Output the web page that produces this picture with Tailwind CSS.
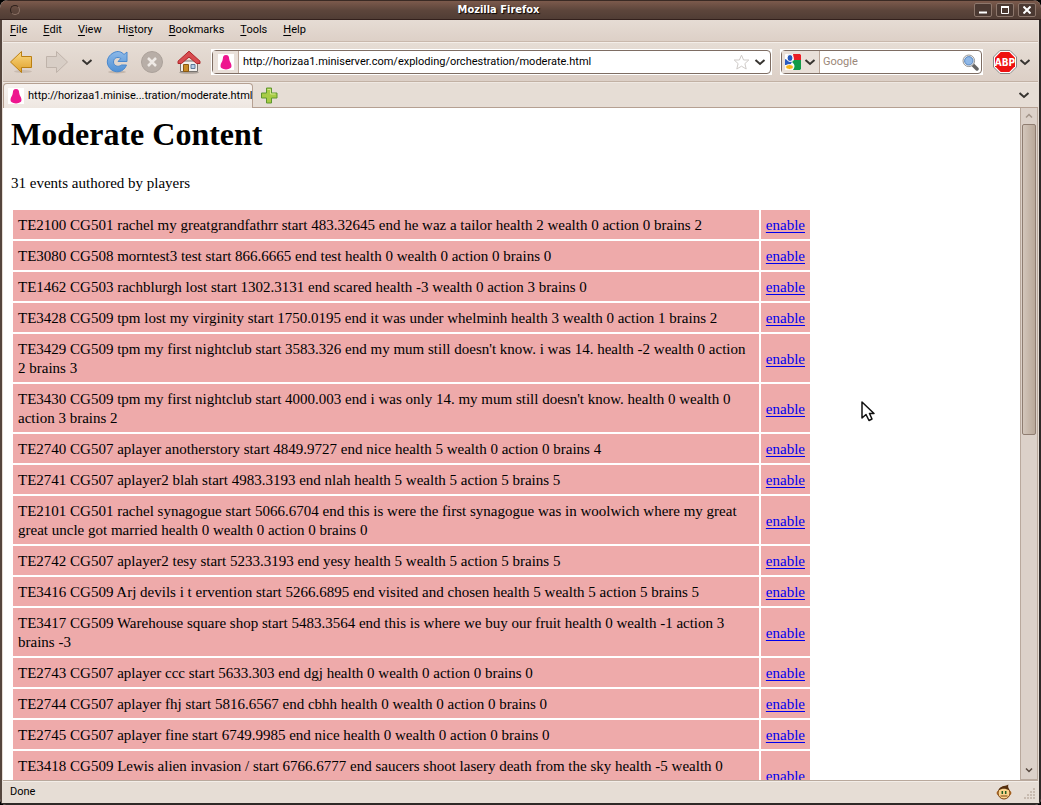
<!DOCTYPE html>
<html lang="en">
<head>
<meta charset="utf-8">
<title>Mozilla Firefox</title>
<script src="https://cdn.jsdelivr.net/npm/@tailwindcss/browser@4"></script>
</head>
<body class="bg-black">
<div class="flex h-screen flex-col overflow-hidden rounded-t-lg rounded-b-md bg-[#e6ddd5] font-['Roboto',sans-serif] text-[11px] text-black">
  <header class="relative flex h-5 shrink-0 items-center justify-center border-t border-[#3a2a24] bg-linear-to-b from-[#7c5a4c] via-[#5c453b] to-[#4f3c34] pr-11 shadow-[inset_0_-1px_0_#33201c]">
    <span class="absolute left-2.5 top-1 size-2.5 rounded-full border border-[#8b7266] border-t-[#2e211c] border-l-[#2e211c]"></span>
    <h1 class="font-['DejaVu_Sans_Condensed','DejaVu_Sans',sans-serif] font-bold text-white [text-shadow:1px_1px_1px_#000]">Mozilla Firefox</h1>
    <div class="absolute right-[5px] top-0.5 flex gap-1">
      <button aria-label="Minimize" class="flex h-3.5 w-[18px] items-center justify-center rounded-xs border border-[#8d776c] bg-[#4b3932]"><svg width="8" height="8" viewBox="0 0 8 8"><path d="M0 6.500H8" stroke="#fff" stroke-width="2"/></svg></button>
      <button aria-label="Maximize" class="flex h-3.5 w-[18px] items-center justify-center rounded-xs border border-[#8d776c] bg-[#4b3932]"><svg width="8" height="8" viewBox="0 0 8 8"><path d="M.5 1H7.500V7.500H.5Z" fill="none" stroke="#fff"/><path d="M0 1H8" stroke="#fff" stroke-width="2"/></svg></button>
      <button aria-label="Close" class="flex h-3.5 w-[18px] items-center justify-center rounded-xs border border-[#8d776c] bg-[#4b3932]"><svg width="8" height="8" viewBox="0 0 8 8"><path d="M.5.5 7.500 7.500M7.500.5.5 7.500" stroke="#fff" stroke-width="2"/></svg></button>
    </div>
  </header>

  <div class="flex min-h-0 flex-1 flex-col border-x-2 border-b-2 border-[#54453d] border-r-[#2f2927] border-b-[#2f2927] px-px">
    <nav class="flex h-[22px] shrink-0 items-center gap-4 border-b border-[#c9b8ac] bg-linear-to-b from-[#e6dcd4] to-[#ddd0c7] px-[7px]">
      <button><u class="underline-offset-2">F</u>ile</button>
      <button><u class="underline-offset-2">E</u>dit</button>
      <button><u class="underline-offset-2">V</u>iew</button>
      <button>Hi<u class="underline-offset-2">s</u>tory</button>
      <button><u class="underline-offset-2">B</u>ookmarks</button>
      <button><u class="underline-offset-2">T</u>ools</button>
      <button><u class="underline-offset-2">H</u>elp</button>
    </nav>

    <div class="flex h-10 shrink-0 items-center border-t border-b border-t-[#f3ede8] border-b-[#c2b1a4] bg-linear-to-b from-[#e6ddd5] to-[#dccfc6] pl-1.5 pr-[7px]">
      <button aria-label="Back"><svg width="24" height="24" viewBox="0 0 24 24"><defs><linearGradient id="gold" x2="0" y2="1"><stop stop-color="#fbd984"/><stop offset="1" stop-color="#dfa02a"/></linearGradient></defs><ellipse cx="14" cy="21.500" rx="9" ry="1.500" fill="#c9bbb0"/><path d="M12.500 1.500V6.500H22.500V17.500H12.500V22.500L1.500 12Z" fill="url(#gold)" stroke="#bb7f11" stroke-linejoin="round"/></svg></button>
      <button aria-label="Forward" class="ml-3"><svg width="24" height="24" viewBox="0 0 24 24"><path d="M11.500 1.500V6.500H1.500V17.500H11.500V22.500L22.500 12Z" fill="#d8cec6" stroke="#bfb3aa" stroke-linejoin="round"/></svg></button>
      <button aria-label="History" class="ml-3"><svg width="12" height="12" viewBox="0 0 12 12"><path d="M1.500 4 6 8 10.500 4" fill="none" stroke="#373430" stroke-width="2"/></svg></button>
      <button aria-label="Reload" class="ml-[13px]"><svg width="22" height="24" viewBox="0 0 22 24"><defs><linearGradient id="blue" x2="0" y2="1"><stop stop-color="#8db9e8"/><stop offset="1" stop-color="#5191d5"/></linearGradient></defs><ellipse cx="11" cy="22" rx="9" ry="1.500" fill="#c4b6ab"/><path d="M21 2V11.500H12L14.800 8.500C11 6 7.500 8.500 7.500 12S12 17.800 15.500 15H20.500C18 22.500 9 24 4 18.500S1.500 6 7 3 15.500 2 18 4.500Z" fill="url(#blue)" stroke="#4a88cd"/></svg></button>
      <button aria-label="Stop" class="ml-[13px]"><svg width="22" height="24" viewBox="0 0 22 24"><circle cx="11" cy="12" r="10.500" fill="#b8aea7" stroke="#aba19a"/><path d="M7 8 15 16M15 8 7 16" stroke="#eee9e5" stroke-width="2.500"/></svg></button>
      <button aria-label="Home" class="ml-3.5"><svg width="24" height="24" viewBox="0 0 24 24"><ellipse cx="12" cy="22.500" rx="10" ry="1.300" fill="#aaa098"/><path d="M3.500 11H20.500V21.500H3.500Z" fill="#f2efec" stroke="#77736f"/><path d="M12 1.200 1 11.200V13.500H4.500L12 7 19.500 13.500H23V11.200Z" fill="#d84c50" stroke="#ae2529" stroke-linejoin="round"/><path d="M6.500 14.500H11.500V21.500H6.500Z" fill="#c98b28" stroke="#8a5a12"/><path d="M14 14.500H18V18.500H14Z" fill="#b6cde5" stroke="#5e7a99"/></svg></button>
      <div class="ml-2.5 flex h-[26px] min-w-0 flex-1 border border-white bg-white">
        <div class="flex min-w-0 flex-1 items-center rounded-sm border border-[#7e6d63] bg-white pr-1">
          <span class="flex h-full w-[26px] items-center justify-center border-r border-[#b9a598] bg-[#e9e0d9]"><svg class="bg-white" width="16" height="16" viewBox="0 0 16 16"><path d="M8 1C5.500 1 5 2.500 4.800 5 4.500 8 2.500 9 2.500 12 2.500 14 4 14.500 5.500 15 7 15.500 9 15.500 10.500 15 12 14.500 13.500 14 13.500 12 13.500 9 11.500 8 11.200 5 11 2.500 10.500 1 8 1Z" fill="#ee168f"/></svg></span>
          <input aria-label="Address" value="http://horizaa1.miniserver.com/exploding/orchestration/moderate.html" class="min-w-0 flex-1 bg-transparent pl-1 outline-none">
          <button aria-label="Bookmark"><svg width="17" height="17" viewBox="0 0 17 17"><path d="M8.500 1.200 10.600 6H15.800L11.900 9.600 13.200 15 8.500 12.200 3.800 15 5.100 9.600 1.200 6H6.400Z" fill="#fff" stroke="#cfcbc8"/></svg></button>
          <button aria-label="Show history" class="ml-1"><svg width="12" height="12" viewBox="0 0 12 12"><path d="M1.500 4 6 8 10.500 4" fill="none" stroke="#373430" stroke-width="2"/></svg></button>
        </div>
      </div>
      <div class="ml-2 flex h-[26px] w-[203px] border border-white bg-white">
        <div class="flex min-w-0 flex-1 items-center rounded-sm border border-[#7e6d63] bg-white pr-0.5">
          <button aria-label="Search engine" class="flex h-full w-[38px] shrink-0 items-center justify-center gap-[3px] border-r border-[#b9a598] bg-[#e9e0d9]"><svg width="16" height="16" viewBox="0 0 16 16"><rect width="16" height="16" rx="1" fill="#fff"/><path d="M8 0H15L16 1V6H9Z" fill="#eb1c24"/><path d="M9 6H16V15L15 16H8C11 12 9 10 7 8Z" fill="#119b48"/><path d="M0 5 7 8 5 11H0Z" fill="#2a5cc0"/><ellipse cx="5" cy="4" rx="3" ry="3.500" fill="#2659bd" stroke="#fff"/><ellipse cx="4.500" cy="13" rx="4" ry="2.500" fill="#f8b617" stroke="#fff"/></svg><svg width="12" height="12" viewBox="0 0 12 12"><path d="M1.500 4 6 8 10.500 4" fill="none" stroke="#373430" stroke-width="2"/></svg></button>
          <input aria-label="Search" placeholder="Google" class="min-w-0 flex-1 bg-transparent pl-[3px] outline-none placeholder:text-[#9b8778]">
          <button aria-label="Search"><svg width="17" height="17" viewBox="0 0 17 17"><path d="M10.500 10.500 15 15" stroke="#666" stroke-width="3.500" stroke-linecap="round"/><circle cx="6.800" cy="6.800" r="5.800" fill="#eee" stroke="#999"/><circle cx="6.800" cy="6.800" r="4.200" fill="#8fb8e8" stroke="#5685c0"/></svg></button>
        </div>
      </div>
      <button aria-label="Adblock Plus" class="ml-2.5 flex items-center gap-0.5"><svg width="24" height="24" viewBox="0 0 24 24"><path d="M7 .5H17L23.500 7V17L17 23.500H7L.5 17V7Z" fill="#fff" stroke="#888"/><path d="M7.700 2H16.300L22 7.700V16.300L16.300 22H7.700L2 16.300V7.700Z" fill="#ee1111"/><text x="12" y="16" text-anchor="middle" font-family="DejaVu Sans Condensed, DejaVu Sans" font-weight="bold" font-size="10" fill="#fff">ABP</text></svg><svg width="12" height="12" viewBox="0 0 12 12"><path d="M1.500 4 6 8 10.500 4" fill="none" stroke="#373430" stroke-width="2"/></svg></button>
    </div>

    <div class="flex h-[26px] shrink-0 items-stretch border-t border-[#efe8e2] bg-[#e6ddd5]">
      <button class="flex w-[250px] items-center gap-1 rounded-t-sm border-x border-t border-[#b5a092] bg-linear-to-b from-[#f7f3f0] to-[#eee7e1] pl-1"><svg class="shrink-0 bg-white" width="16" height="16" viewBox="0 0 16 16"><path d="M8 1C5.500 1 5 2.500 4.800 5 4.500 8 2.500 9 2.500 12 2.500 14 4 14.500 5.500 15 7 15.500 9 15.500 10.500 15 12 14.500 13.500 14 13.500 12 13.500 9 11.500 8 11.200 5 11 2.500 10.500 1 8 1Z" fill="#ee168f"/></svg><span class="whitespace-nowrap">http://horizaa1.minise...tration/moderate.html</span></button>
      <div class="flex flex-1 items-center justify-between border-b border-[#b5a092] pl-2 pr-2">
        <button aria-label="New tab"><svg width="17" height="17" viewBox="0 0 17 17"><path d="M5.500 1H10.500V6H16V11H10.500V16H5.500V11H.5V6H5.500Z" fill="#a8cc45" stroke="#5e972f"/><path d="M6.500 2.500H9.500V7H14.500" fill="none" stroke="#d4e88f"/></svg></button>
        <button aria-label="List all tabs"><svg width="12" height="12" viewBox="0 0 12 12"><path d="M1.500 4 6 8 10.500 4" fill="none" stroke="#373430" stroke-width="2"/></svg></button>
      </div>
    </div>

    <div class="flex min-h-0 flex-1 bg-white">
      <main class="min-w-0 flex-1 overflow-hidden px-2 pt-2 font-['Liberation_Serif',serif] text-[15px] leading-[19px]">
        <h2 class="text-[32px] leading-9 font-bold">Moderate Content</h2>
        <p class="mt-[22px] mb-[15px]">31 events authored by players</p>
        <table class="w-[801px] border-separate border-spacing-0.5 [&_a]:text-[#0000ee] [&_a]:underline [&_a]:underline-offset-2 [&_td]:bg-[#eeaaaa] [&_td]:px-[5px] [&_td]:pt-1.5 [&_td]:pb-1">
          <tr><td>TE2100 CG501 rachel my greatgrandfathrr start 483.32645 end he waz a tailor health 2 wealth 0 action 0 brains 2</td><td class="w-[49px]"><a href="#">enable</a></td></tr>
          <tr><td>TE3080 CG508 morntest3 test start 866.6665 end test health 0 wealth 0 action 0 brains 0</td><td><a href="#">enable</a></td></tr>
          <tr><td>TE1462 CG503 rachblurgh lost start 1302.3131 end scared health -3 wealth 0 action 3 brains 0</td><td><a href="#">enable</a></td></tr>
          <tr><td>TE3428 CG509 tpm lost my virginity start 1750.0195 end it was under whelminh health 3 wealth 0 action 1 brains 2</td><td><a href="#">enable</a></td></tr>
          <tr><td>TE3429 CG509 tpm my first nightclub start 3583.326 end my mum still doesn't know. i was 14. health -2 wealth 0 action<br>2 brains 3</td><td><a href="#">enable</a></td></tr>
          <tr><td>TE3430 CG509 tpm my first nightclub start 4000.003 end i was only 14. my mum still doesn't know. health 0 wealth 0<br>action 3 brains 2</td><td><a href="#">enable</a></td></tr>
          <tr><td>TE2740 CG507 aplayer anotherstory start 4849.9727 end nice health 5 wealth 0 action 0 brains 4</td><td><a href="#">enable</a></td></tr>
          <tr><td>TE2741 CG507 aplayer2 blah start 4983.3193 end nlah health 5 wealth 5 action 5 brains 5</td><td><a href="#">enable</a></td></tr>
          <tr><td>TE2101 CG501 rachel synagogue start 5066.6704 end this is were the first synagogue was in woolwich where my great<br>great uncle got married health 0 wealth 0 action 0 brains 0</td><td><a href="#">enable</a></td></tr>
          <tr><td>TE2742 CG507 aplayer2 tesy start 5233.3193 end yesy health 5 wealth 5 action 5 brains 5</td><td><a href="#">enable</a></td></tr>
          <tr><td>TE3416 CG509 Arj devils i t ervention start 5266.6895 end visited and chosen health 5 wealth 5 action 5 brains 5</td><td><a href="#">enable</a></td></tr>
          <tr><td>TE3417 CG509 Warehouse square shop start 5483.3564 end this is where we buy our fruit health 0 wealth -1 action 3<br>brains -3</td><td><a href="#">enable</a></td></tr>
          <tr><td>TE2743 CG507 aplayer ccc start 5633.303 end dgj health 0 wealth 0 action 0 brains 0</td><td><a href="#">enable</a></td></tr>
          <tr><td>TE2744 CG507 aplayer fhj start 5816.6567 end cbhh health 0 wealth 0 action 0 brains 0</td><td><a href="#">enable</a></td></tr>
          <tr><td>TE2745 CG507 aplayer fine start 6749.9985 end nice health 0 wealth 0 action 0 brains 0</td><td><a href="#">enable</a></td></tr>
          <tr><td>TE3418 CG509 Lewis alien invasion / start 6766.6777 end saucers shoot lasery death from the sky health -5 wealth 0<br>action 5 brains 1</td><td><a href="#">enable</a></td></tr>
        </table>
      </main>
      <div class="flex w-[18px] shrink-0 flex-col items-center border border-t-0 border-[#b9a99d] bg-[#dcd1c9]">
        <button aria-label="Scroll up" class="flex h-4 items-center"><svg width="8" height="8" viewBox="0 0 8 8"><path d="M1 5.500 4 2.500 7 5.500" fill="none" stroke="#a3958a" stroke-width="1.500"/></svg></button>
        <div class="h-[311px] w-3.5 rounded-xs border border-[#8f7d71] bg-linear-to-r from-[#d3c6bb] to-[#b9a899]"></div>
        <button aria-label="Scroll down" class="mt-auto flex h-[18px] items-center"><svg width="8" height="8" viewBox="0 0 8 8"><path d="M1 2.500 4 5.500 7 2.500" fill="none" stroke="#57483f" stroke-width="1.500"/></svg></button>
      </div>
    </div>

    <footer class="flex h-[23px] shrink-0 items-center border-t border-[#b9a99d] pl-[7px] shadow-[inset_0_1px_0_#f3ede8]">
      <span class="flex-1">Done</span>
      <button aria-label="Greasemonkey"><svg width="16" height="16" viewBox="0 0 16 16"><ellipse cx="8" cy="9" rx="7.500" ry="4" fill="#b9742f"/><circle cx="8" cy="9" r="6" fill="#fbd38c" stroke="#7a4312"/><path d="M2.500 6.500C3.500 2 8 2.500 12.500.5 11.500 2.500 12.500 4 13.500 6.500 9 4 6 4.500 2.500 6.500Z" fill="#57300f"/><path d="M6.300 7V10M9.700 7V10" stroke="#1f5d22" stroke-width="1.500"/><path d="M4.500 12H11.500" stroke="#7a4312"/></svg></button>
      <svg class="ml-3 mr-0.5 mt-1" width="12" height="12" viewBox="0 0 12 12"><path d="M9 1h2M6 4h2M9 4h2M3 7h2M6 7h2M9 7h2M0 10h2M3 10h2M6 10h2M9 10h2" stroke="#bfb0a4" stroke-width="1.500"/></svg>
    </footer>
  </div>
</div>
<svg class="pointer-events-none absolute top-[401px] left-[861px]" width="15" height="22" viewBox="0 0 15 22"><path d="M1 1V17L5 13.500 8 19.500 11 18 8.500 12.500H13Z" fill="#fff" stroke="#111" stroke-width="1.500" stroke-linejoin="round"/></svg>
</body>
</html>
